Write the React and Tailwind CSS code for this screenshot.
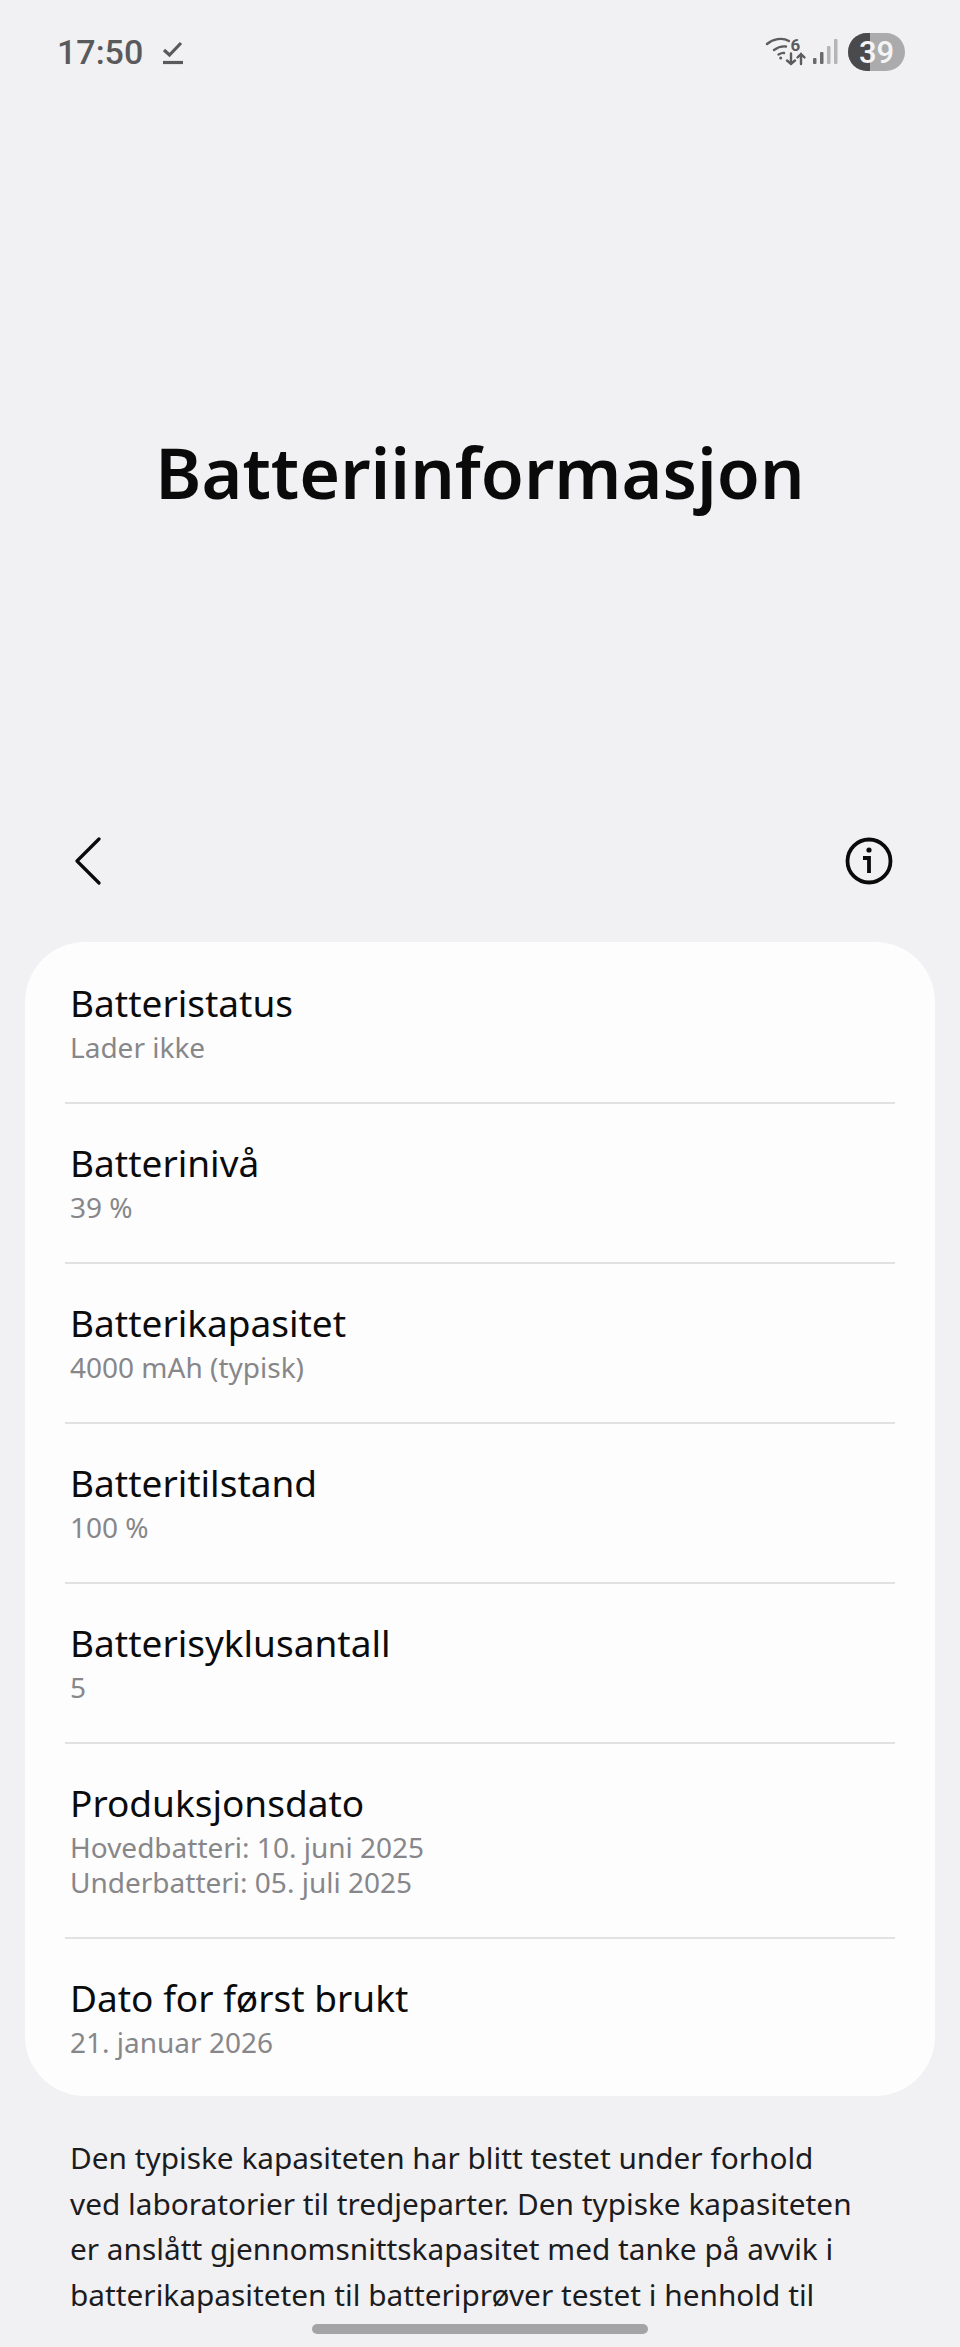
import React from 'react';

const rows = [
  { title: 'Batteristatus', lines: ['Lader ikke'] },
  { title: 'Batterinivå', lines: ['39 %'] },
  { title: 'Batterikapasitet', lines: ['4000 mAh (typisk)'] },
  { title: 'Batteritilstand', lines: ['100 %'] },
  { title: 'Batterisyklusantall', lines: ['5'] },
  { title: 'Produksjonsdato', lines: ['Hovedbatteri: 10. juni 2025', 'Underbatteri: 05. juli 2025'] },
  { title: 'Dato for først brukt', lines: ['21. januar 2026'] },
];

const StatusBar = () => (
  <div className="flex h-[104px] items-start justify-between pl-[57px] pr-[55px] pt-[33px]">
    <div className="flex items-center">
      <span className="font-['Roboto',sans-serif] text-[34px] font-medium leading-[38px] text-[#5a5a5c]">17:50</span>
      <svg className="ml-[19px] mt-[2px]" width="22" height="24" viewBox="0 0 22 24" fill="none" stroke="#5a5a5c" strokeWidth="3.200">
        <path d="M2 9l5.500 5L19 2" />
        <path d="M1 21.500h20" />
      </svg>
    </div>
    <div className="flex items-center">
      <svg className="overflow-visible" width="40" height="30" viewBox="0 0 40 30" fill="none" stroke="#5c5c5e" strokeWidth="2.400" strokeLinecap="round">
        <path d="M1 7c6-5 15-7 22-3" />
        <path d="M8 13c4-3 8-4 12-3.500" />
        <path d="M12.500 17.500c2-1 4-2 5.500-1.500" />
        <circle cx="14.700" cy="21" r="1.500" fill="#5c5c5e" stroke="none" />
        <text x="24.500" y="13.500" fill="#5c5c5e" stroke="none" fontFamily="Roboto, sans-serif" fontWeight="700" fontSize="17">6</text>
        <path d="M25 16.500v10.500M21 23.500l4 3.500 4-3.500" />
        <path d="M35 27V17M31.500 20.500l3.500-3.500 3.500 3.500" />
      </svg>
      <svg className="ml-[7px]" width="25" height="26" viewBox="0 0 25 26">
        <rect x="0" y="19" width="3.500" height="6" rx="1" fill="#6a6a6c" />
        <rect x="7" y="13" width="3.500" height="12" rx="1" fill="#6a6a6c" />
        <rect x="14" y="7" width="3.500" height="18" rx="1" fill="#b5b5b7" />
        <rect x="21" y="0" width="3.500" height="25" rx="1" fill="#b5b5b7" />
      </svg>
      <div className="relative ml-[10px] flex h-[38px] w-[57px] items-center justify-center overflow-hidden rounded-full bg-[#ababad]">
        <div className="absolute inset-y-0 left-0 w-[22px] bg-[#4a4a4c]" />
        <span className="relative font-['Roboto',sans-serif] text-[31px] font-medium leading-none text-[#f4f4f5]">39</span>
      </div>
    </div>
  </div>
);

const Toolbar = () => (
  <div className="flex h-[110px] items-center justify-between pl-[74px] pr-[67px]">
    <svg width="28" height="48" viewBox="0 0 28 48" fill="none" stroke="#0a0a0a" strokeWidth="3.200" strokeLinecap="round" strokeLinejoin="round">
      <path d="M25 2L3 24l22 22" />
    </svg>
    <svg width="48" height="48" viewBox="0 0 48 48" fill="none" stroke="#0a0a0a" strokeWidth="3.800">
      <circle cx="24" cy="24" r="21.500" />
      <circle cx="24" cy="13" r="2.600" fill="#0a0a0a" stroke="none" />
      <path d="M18 21h6v15" />
    </svg>
  </div>
);

const Row = ({ title, lines, last }) => (
  <div className="mx-[40px]">
    <div className="px-[5px] pt-[38px]">
      <div className="text-[37px] leading-[42px] text-[#0b0b0c]">{title}</div>
      <div className="mt-[6px] text-[28px] leading-[35px] text-[#87878a]">
        {lines.map((line) => (
          <div key={line}>{line}</div>
        ))}
      </div>
    </div>
    {!last && <div className="mt-[37px] h-[2px] bg-[#e1e1e3]" />}
  </div>
);

export default function App() {
  return (
    <div className="relative h-[2347px] overflow-hidden bg-[#f1f1f3] font-['Noto_Sans',sans-serif]">
      <StatusBar />
      <div className="flex h-[702px] items-start justify-center pt-[319px]">
        <h1 className="text-[70px] font-semibold leading-[98px] text-[#0a0a0a]">Batteriinformasjon</h1>
      </div>
      <Toolbar />
      <div className="mx-[25px] mt-[26px] h-[1154px] rounded-[60px] bg-[#fdfdfe] pt-[2px]">
        {rows.map((row, i) => (
          <Row key={row.title} {...row} last={i === rows.length - 1} />
        ))}
      </div>
      <p className="ml-[70px] mt-[39px] w-[795px] text-[29.800px] leading-[45.600px] text-[#1c1c1e]">
        Den typiske kapasiteten har blitt testet under forhold ved laboratorier til tredjeparter. Den typiske kapasiteten er anslått gjennomsnittskapasitet med tanke på avvik i batterikapasiteten til batteriprøver testet i henhold til
      </p>
      <div className="absolute bottom-[13px] left-[312px] h-[10px] w-[336px] rounded-full bg-[#a4a4a6]" />
    </div>
  );
}
